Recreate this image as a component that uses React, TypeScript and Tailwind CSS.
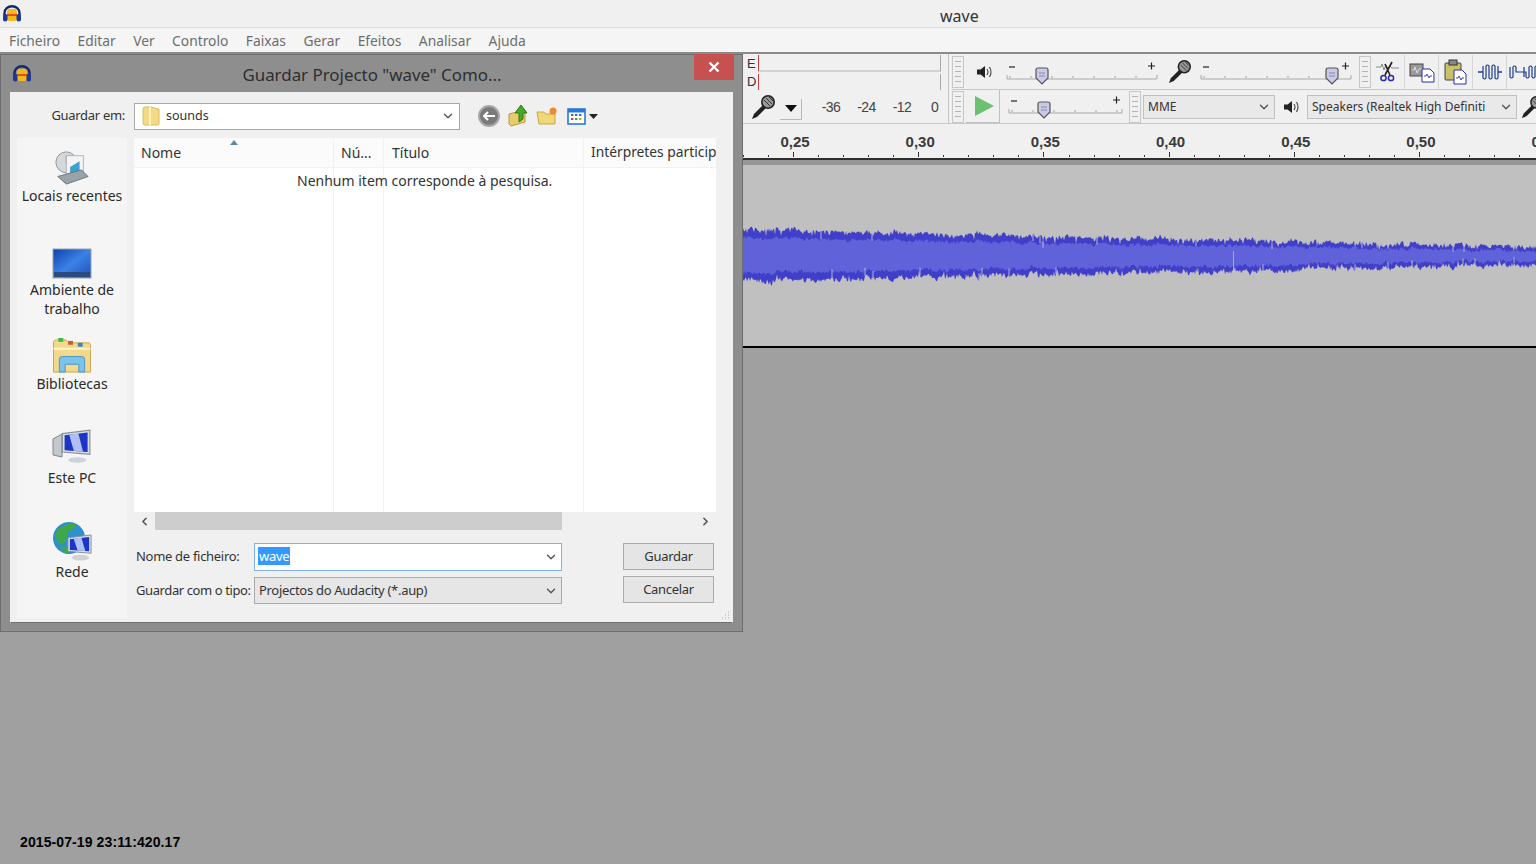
import { useMemo } from "react"
import { ChevronDown, ChevronLeft, ChevronRight } from "lucide-react"

const sans = "font-['Noto_Sans',sans-serif]"

function AudacityLogo() {
    return (
        <svg width="20" height="18" viewBox="0 0 20 18">
            <rect x="5" y="4" width="10" height="12" rx="3" fill="#f8b818" />
            <rect x="5" y="9" width="10" height="2" fill="#e0501a" />
            <path d="M2.5 11 V8 a7.5 6.8 0 0 1 15 0 V11" fill="none" stroke="#16286e" strokeWidth="2.4" />
            <rect x="1" y="9" width="4.5" height="7.5" rx="2" fill="#1d3a9a" />
            <rect x="14.5" y="9" width="4.5" height="7.5" rx="2" fill="#1d3a9a" />
        </svg>
    )
}

function Mic({ size = 26 }: { size?: number }) {
    return (
        <svg width={size} height={size} viewBox="0 0 26 26" className="shrink-0">
            <path d="M2 25 L4 20 L13 11 L16 14 L7 23 Z" fill="#222" />
            <circle cx="18" cy="8" r="6.2" fill="#9a9a9a" stroke="#222" strokeWidth="1.6" />
            <path d="M14 6 L20 12 M16 4 L22 10 M19 3 L23 7" stroke="#333" strokeWidth="1" />
        </svg>
    )
}

function Speaker() {
    return (
        <svg width="17" height="16" viewBox="0 0 17 16">
            <path d="M1 5.5 H4.5 L9 2 V14 L4.5 10.5 H1 Z" fill="#222" />
            <path d="M11 5 Q13 8 11 11 M13.5 3 Q16.5 8 13.5 13" fill="none" stroke="#444" strokeWidth="1.1" />
        </svg>
    )
}

function Gripper({ h }: { h: string }) {
    return (
        <div className={`w-[12px] ${h} shrink-0 border border-[#c8c8c8] flex flex-col justify-center gap-[4px] px-[2px]`}>
            {[0, 1, 2, 3, 4].map((i) => (
                <div key={i} className="h-px bg-[#b4b4b4]" />
            ))}
        </div>
    )
}

function Slider({ width, thumb, trackY, height }: { width: number; thumb: number; trackY: number; height: number }) {
    const ticks = []
    for (let x = 4; x < width - 2; x += 21) ticks.push(x)
    return (
        <svg width={width} height={height} className="shrink-0">
            <path d={`M3 ${trackY - 12} h6`} stroke="#222" strokeWidth="1.2" />
            <path d={`M${width - 10} ${trackY - 13} h7 M${width - 6.5} ${trackY - 16.5} v7`} stroke="#222" strokeWidth="1.2" />
            <path d={`M1 ${trackY - 4} V${trackY} H${width - 1} V${trackY - 4}`} fill="none" stroke="#a8a8a8" />
            {ticks.map((x) => (
                <path key={x} d={`M${x} ${trackY - 3} v2`} stroke="#a0a0a0" />
            ))}
            <path
                d={`M${thumb - 6} ${trackY - 9} q0 -2 2 -2 h8 q2 0 2 2 v8 l-6 6 l-6 -6 Z`}
                fill="#c9c9e8"
                stroke="#555"
                strokeWidth="1.2"
            />
            <path d={`M${thumb - 3} ${trackY - 6} h6 M${thumb - 3} ${trackY - 3} h6`} stroke="#8888a8" />
        </svg>
    )
}

function Select({ width, text }: { width: string; text: string }) {
    return (
        <div className={`${width} h-[24px] shrink-0 flex items-center justify-between border border-[#c0c0c0] bg-[#e9e9e9] pl-[4px] pr-[3px] text-[12px] text-[#333] ${sans}`}>
            <span className="whitespace-nowrap overflow-hidden">{text}</span>
            <ChevronDown size={14} strokeWidth={2.4} className="text-[#555] shrink-0" />
        </div>
    )
}

function ToolButton({ children }: { children: React.ReactNode }) {
    return <div className="w-[34px] h-[34px] shrink-0 border-r border-[#d6d6d6] flex items-center justify-center">{children}</div>
}

function MeterToolbar() {
    return (
        <div className="w-[206px] h-[70px] shrink-0 border-r border-[#c6c6c6] flex flex-col">
            <div className="flex items-center h-[19px]">
                <span className="w-[15px] pl-[4px] text-[13px] leading-none text-[#333] font-['Liberation_Sans',sans-serif]">E</span>
                <div className="w-[183px] h-[17px] bg-[#f0f0f0] border-l border-l-[#c04040] border-r border-r-[#a8a8a8] border-b-2 border-b-[#d2d2d2]" />
            </div>
            <div className="flex items-center h-[17px]">
                <span className="w-[15px] pl-[4px] text-[13px] leading-none text-[#333] font-['Liberation_Sans',sans-serif]">D</span>
                <div className="w-[183px] h-[16px] bg-[#f0f0f0] border-l border-l-[#c04040] border-r border-r-[#a8a8a8]" />
            </div>
            <div className="flex items-center h-[34px] pl-[7px]">
                <Mic />
                <div className="ml-[4px] w-[22px] h-[21px] mt-[4px] shrink-0 border-r border-b border-[#b8b8b8] flex items-center justify-center">
                    <svg width="12" height="7"><path d="M0 0 H12 L6 7 Z" fill="#111" /></svg>
                </div>
                <div className="flex shrink-0 ml-[11px] text-[14px] tracking-[-0.5px] text-[#444] font-['Liberation_Sans',sans-serif]">
                    <span className="w-[36px] text-center">-36</span>
                    <span className="w-[35px] text-center">-24</span>
                    <span className="w-[36px] text-center">-12</span>
                    <span className="w-[26px] pl-[11px]">0</span>
                </div>
            </div>
        </div>
    )
}

function EditIcons() {
    return (
        <div className="flex shrink-0">
            <ToolButton>
                <svg width="24" height="22" viewBox="0 0 24 22">
                    <path d="M0 6 h5 l1 -3 l2 6 l2 -5 l2 4 l2 -3 l2 2 h7" fill="none" stroke="#888" />
                    <path d="M16 1 L9 14 M9 3 L14 14" stroke="#222" strokeWidth="1.6" />
                    <circle cx="7.5" cy="17" r="2.6" fill="none" stroke="#2a2ab0" strokeWidth="1.5" />
                    <circle cx="15" cy="17" r="2.6" fill="none" stroke="#2a2ab0" strokeWidth="1.5" />
                </svg>
            </ToolButton>
            <ToolButton>
                <svg width="26" height="22" viewBox="0 0 26 22">
                    <rect x="1" y="3" width="13" height="12" fill="#999" stroke="#444" />
                    <path d="M3 9 h2 l1 -3 l2 6 l2 -4 h3" stroke="#ddd" fill="none" />
                    <path d="M13 8 h8 l4 4 v9 h-12 Z" fill="#fff" stroke="#2a2ab0" />
                    <path d="M15 15 h2 l1 -2 l2 4 l1 -2 h2" stroke="#4a4ab0" fill="none" />
                </svg>
            </ToolButton>
            <ToolButton>
                <svg width="26" height="26" viewBox="0 0 26 26">
                    <rect x="2" y="4" width="16" height="17" rx="1" fill="#c9c16a" stroke="#444" />
                    <rect x="6" y="1" width="8" height="5" fill="#888" stroke="#333" />
                    <path d="M11 11 h8 l4 4 v10 h-12 Z" fill="#fff" stroke="#2a2ab0" />
                    <path d="M13 19 h2 l1 -2 l2 4 l1 -2 h2" stroke="#4a4ab0" fill="none" />
                </svg>
            </ToolButton>
            <ToolButton>
                <svg width="26" height="20" viewBox="0 0 26 20">
                    <path d="M1 10 H6 M21 10 H25" stroke="#1a3a90" strokeWidth="1.3" />
                    <path d="M6 4 V16 Q7.5 18 9 16 V4 Q10.5 2 12 4 V16 Q13.5 18 15 16 V4 Q16.5 2 18 4 V16 Q19.5 18 21 16 V4" stroke="#1a3a90" strokeWidth="1.2" fill="none" />
                </svg>
            </ToolButton>
            <div className="w-[32px] h-[34px] shrink-0 flex items-center justify-end">
                <svg width="30" height="20" viewBox="0 0 30 20">
                    <path d="M1 5 V15 Q2.5 17 4 15 V5 Q5.5 3 7 5 V10 H15 V5 V15 M15 10 H17 V15 Q18.5 17 20 15 V5 Q21.5 3 23 5 V15 Q24.5 17 26 15 V5 Q27.5 3 29 5 V15" stroke="#1a3a90" strokeWidth="1.2" fill="none" />
                </svg>
            </div>
        </div>
    )
}

function Toolbars() {
    return (
        <div className="h-[70px] flex bg-[#f0f0f0] border-b border-[#c8c8c8] overflow-hidden">
            <MeterToolbar />
            <div className="flex flex-col flex-1 min-w-0 pl-[3px]">
                <div className="h-[36px] shrink-0 flex items-center border-b border-[#c8c8c8]">
                    <Gripper h="h-[32px]" />
                    <div className="w-[37px] shrink-0 flex justify-end pr-[10px] ml-[2px]"><Speaker /></div>
                    <div className="ml-[3px]"><Slider width={152} thumb={36} trackY={24} height={34} /></div>
                    <div className="w-[42px] shrink-0 flex justify-center"><Mic size={25} /></div>
                    <Slider width={152} thumb={132} trackY={24} height={34} />
                    <div className="ml-[7px]"><Gripper h="h-[32px]" /></div>
                    <EditIcons />
                </div>
                <div className="h-[33px] shrink-0 flex items-center">
                    <Gripper h="h-[32px]" />
                    <div className="w-[34px] h-[33px] shrink-0 flex items-center justify-center pl-[3px] border-r border-b border-[#c0c0c0] ml-[2px]">
                        <svg width="19" height="20"><path d="M0 0 L19 10 L0 20 Z" fill="#6cc070" /></svg>
                    </div>
                    <div className="ml-[8px]"><Slider width={115} thumb={36} trackY={23} height={33} /></div>
                    <div className="ml-[6px] mr-[2px]"><Gripper h="h-[32px]" /></div>
                    <Select width="w-[132px]" text="MME" />
                    <div className="w-[32px] shrink-0 flex justify-center"><Speaker /></div>
                    <Select width="w-[210px]" text="Speakers (Realtek High Definiti" />
                    <div className="ml-[3px] shrink-0"><Mic size={24} /></div>
                </div>
            </div>
        </div>
    )
}

function Ruler() {
    const labels = ["0,25", "0,30", "0,35", "0,40", "0,45", "0,50", "0,55"]
    const minor: number[] = []
    for (let x = 0; x < 800; x += 25.04) minor.push(x)
    return (
        <div className="h-[36px] bg-[#f0f0f0] flex flex-col overflow-hidden">
            <div className="h-[28px] shrink-0 flex items-end font-['Liberation_Sans',sans-serif] font-bold text-[15px] leading-[20px] text-[#3a3a3a]">
                {labels.map((label, i) => (
                    <div key={label} className={`w-[125.2px] shrink-0 text-center ${i === 0 ? "ml-[-10.6px]" : ""}`}>{label}</div>
                ))}
            </div>
            <svg width="793" height="6" className="block shrink-0">
                {minor.map((x, i) => {
                    const px = Math.round(x) + 0.5
                    return <path key={i} d={`M${px} ${i % 5 === 2 ? 0 : 3} V5`} stroke="#333" strokeWidth="1" />
                })}
            </svg>
            <div className="h-[2px] shrink-0 bg-[#2e2e2e]" />
        </div>
    )
}

function Waveform() {
    const paths = useMemo(() => {
        let seed = 19
        const rnd = () => {
            seed = (seed * 16807) % 2147483647
            return seed / 2147483647
        }
        const w = 793
        let upper = ""
        let lower = ""
        let innerTop = ""
        let innerBottom = ""
        let slowA = 0
        let slowB = 0
        let spikes = ""
        for (let x = 0; x <= w; x += 1) {
            const t = x / w
            const topEnv = 61 + 17 * t
            const botEnv = 120 - 16 * t
            const band = 12 - 4 * t
            slowA = slowA * 0.7 + (rnd() - 0.5) * 2.6
            slowB = slowB * 0.7 + (rnd() - 0.5) * 2.6
            const up = topEnv + 4 + slowA * 1.2 + (rnd() - 0.5) * 4 + (rnd() > 0.94 ? 4 : 0)
            const low = botEnv - 4 + slowB * 1.2 + (rnd() - 0.5) * 4 - (rnd() > 0.94 ? 4 : 0)
            upper += `${x === 0 ? "M" : "L"}${x} ${up.toFixed(1)} `
            lower = `L${x} ${low.toFixed(1)} ` + lower
            innerTop += `${x === 0 ? "M" : "L"}${x} ${(topEnv + band + slowA * 0.8 + (rnd() - 0.5) * 3).toFixed(1)} `
            innerBottom = `L${x} ${(botEnv - band + slowB * 0.8 + (rnd() - 0.5) * 3).toFixed(1)} ` + innerBottom
            if (rnd() > 0.975) {
                const isTop = rnd() > 0.5
                spikes += isTop ? `M${x} ${up.toFixed(1)} v${(band * 0.7).toFixed(1)} ` : `M${x} ${low.toFixed(1)} v-${(band * 0.7).toFixed(1)} `
            }
        }
        return { outer: upper + lower + "Z", inner: innerTop + innerBottom + "Z", spikes }
    }, [])

    return (
        <div className="h-[183px] bg-[#c0c0c0] border-b-2 border-black">
            <svg width="793" height="181" className="block">
                <path d={paths.outer} fill="#3f3fc9" />
                <path d={paths.inner} fill="#5f62d9" />
                <path d={paths.spikes} stroke="#b4b4d8" strokeWidth="1" fill="none" />
                <path d="M490.5 86 V106" stroke="#a8a8dc" strokeWidth="1" />
            </svg>
        </div>
    )
}

function SidebarItem({ label, children }: { label: string; children: React.ReactNode }) {
    return (
        <div className="h-[94px] flex flex-col items-center">
            <div className="h-[48px] shrink-0 flex items-end justify-center">{children}</div>
            <div className="text-center leading-[19px] text-[14px] text-[#2a2a2a]">{label}</div>
        </div>
    )
}

function MonitorGlyph({ w = 28 }: { w?: number }) {
    return (
        <svg width={w} height={w} viewBox="0 0 28 28">
            <path d="M2 4 L26 1 V20 L2 18 Z" fill="#d8dde4" stroke="#8a9099" />
            <path d="M4 5.5 L24 3 V18 L4 16.5 Z" fill="#1a35c8" />
            <path d="M8 5 L16 4 L20 17.5 L12 17 Z" fill="#e4ecff" opacity="0.75" />
            <ellipse cx="15" cy="24.5" rx="9" ry="3" fill="#cfd3d8" />
        </svg>
    )
}

function Sidebar() {
    return (
        <div className={`w-[110px] h-[480px] shrink-0 bg-[#f5f5f5] ${sans}`}>
            <SidebarItem label="Locais recentes">
                <svg width="40" height="36" viewBox="0 0 40 38">
                    <circle cx="14" cy="13" r="11" fill="#d4d8da" stroke="#8a9399" />
                    <path d="M14 6 v7 h6" fill="none" stroke="#6a7379" />
                    <rect x="14" y="6" width="18" height="20" fill="#f4f4f4" stroke="#b0b4b8" />
                    <path d="M18 18 L28 12 V24 L18 26 Z" fill="#3ba2d0" />
                    <path d="M5 28 L30 21 L37 28 L14 36 Z" fill="#9aa3a8" stroke="#6a7379" />
                </svg>
            </SidebarItem>
            <SidebarItem label="Ambiente de trabalho">
                <svg width="40" height="31" viewBox="0 0 40 31" className="mb-[1px]">
                    <defs>
                        <linearGradient id="desk" x1="0" y1="0" x2="1" y2="1">
                            <stop offset="0" stopColor="#0e3fa8" />
                            <stop offset="0.5" stopColor="#3b82e6" />
                            <stop offset="1" stopColor="#1e4fb8" />
                        </linearGradient>
                    </defs>
                    <rect x="1" y="1" width="38" height="29" fill="url(#desk)" stroke="#9aa4ad" />
                    <rect x="2" y="24" width="36" height="5" fill="#2a4a80" />
                </svg>
            </SidebarItem>
            <SidebarItem label="Bibliotecas">
                <svg width="40" height="37" viewBox="0 0 40 38">
                    <path d="M1 36 V6 Q1 3 4 3 H14 L17 6 H37 Q39 6 39 9 V36 Z" fill="#f3d98c" stroke="#c8a850" />
                    <rect x="6" y="1" width="5" height="4" fill="#3bb84a" />
                    <rect x="16" y="4" width="5" height="4" fill="#c0603a" />
                    <rect x="26" y="6" width="5" height="4" fill="#3a88c8" />
                    <path d="M1 12 H39" stroke="#fff3c8" strokeWidth="2" />
                    <path d="M7 36 V23 Q7 20 10 20 H30 Q33 20 33 23 V36 H27 V28 H13 V36 Z" fill="#7cc2ea" stroke="#4a96c8" />
                </svg>
            </SidebarItem>
            <SidebarItem label="Este PC">
                <svg width="40" height="36" viewBox="0 0 40 36" className="mb-[3px]">
                    <path d="M1 10 L10 5 V28 L1 26 Z" fill="#c4c8cc" stroke="#808890" />
                    <g transform="translate(8 0) scale(1.15)">
                        <path d="M2 4 L26 1 V22 L2 20 Z" fill="#d8dde4" stroke="#8a9099" />
                        <path d="M4 5.5 L24 3 V20 L4 18.5 Z" fill="#1a35c8" />
                        <path d="M8 5 L16 4 L20 19.5 L12 19 Z" fill="#e4ecff" opacity="0.75" />
                        <ellipse cx="15" cy="27" rx="8" ry="2.4" fill="#cfd3d8" />
                    </g>
                </svg>
            </SidebarItem>
            <SidebarItem label="Rede">
                <div className="relative w-[40px] h-[40px] mb-[1px]">
                    <svg width="40" height="40" viewBox="0 0 40 40">
                        <circle cx="17" cy="17" r="16" fill="#2f8fd0" />
                        <path d="M6 8 Q14 2 24 3 Q22 10 15 11 Q16 20 10 24 Q4 20 3 14 Z" fill="#3fa848" />
                        <path d="M8 26 Q14 24 20 30 L14 33 Z" fill="#3fa848" />
                    </svg>
                    <div className="absolute right-[-1px] bottom-0"><MonitorGlyph w={27} /></div>
                </div>
            </SidebarItem>
        </div>
    )
}

function FileList() {
    return (
        <div className={`relative w-[582px] h-[374px] bg-white overflow-hidden flex text-[14px] text-[#333] ${sans}`}>
            <div className="w-[200px] shrink-0 border-r border-[#eef1f6]">
                <div className="relative h-[30px] pl-[7px] pb-[1px] flex items-center bg-[#fbfbfb] border-b border-[#eef1f6]">
                    Nome
                    <svg width="8" height="5" className="absolute left-[96px] top-[2px]"><path d="M0 5 L4 0 L8 5 Z" fill="#5a88a8" /></svg>
                </div>
            </div>
            <div className="w-[50px] shrink-0 border-r border-[#eef1f6]">
                <div className="h-[30px] pl-[7px] pb-[1px] flex items-center bg-[#fbfbfb] border-b border-[#eef1f6]">Nú...</div>
            </div>
            <div className="w-[200px] shrink-0 border-r border-[#eef1f6]">
                <div className="h-[30px] pl-[8px] pb-[1px] flex items-center bg-[#fbfbfb] border-b border-[#eef1f6]">Título</div>
            </div>
            <div className="flex-1 min-w-0">
                <div className="h-[30px] pl-[7px] flex items-center whitespace-nowrap overflow-hidden bg-[#fbfbfb] border-b border-[#eef1f6] text-[13.8px]">Intérpretes particip</div>
            </div>
            <div className="absolute left-[163px] top-[32px] whitespace-nowrap">Nenhum item corresponde à pesquisa.</div>
        </div>
    )
}

function Dialog() {
    return (
        <div className="w-[743px] h-[578px] shrink-0 bg-[#8e8e8e] border border-[#6e6e6e] flex flex-col">
            <div className="h-[37px] shrink-0 flex items-start">
                <div className="w-[22px] h-[37px] ml-[11px] flex items-center"><AudacityLogo /></div>
                <div className={`flex-1 h-[37px] flex items-center justify-center text-[16.9px] text-[#2e2e2e] pl-[16px] pt-[2px] ${sans}`}>Guardar Projecto "wave" Como...</div>
                <div className="w-[40px] h-[26px] mt-[-1px] mr-[8px] bg-[#c75050] flex items-center justify-center">
                    <svg width="12" height="12"><path d="M1.5 1.5 L10.5 10.5 M10.5 1.5 L1.5 10.5" stroke="#fff" strokeWidth="2.4" /></svg>
                </div>
            </div>
            <div className="mx-[9px] w-[723px] h-[531px] bg-[#f0f0f0] border border-[#f0f0f0] border-b-[#707070] flex flex-col">
                <div className="h-[37px] shrink-0 flex items-center pt-[9px]">
                    <div className={`w-[114px] text-right text-[13px] tracking-[-0.3px] text-[#333] ${sans}`}>Guardar em:</div>
                    <div className={`ml-[9px] w-[326px] h-[27px] bg-white border border-[#a8a8a8] flex items-center pl-[7px] pr-[4px] text-[12.5px] text-[#333] ${sans}`}>
                        <svg width="18" height="20" viewBox="0 0 18 20"><path d="M1 3 Q1 1 3 1 H8 L17 3 V18 Q17 19 15 19 H3 Q1 19 1 17 Z" fill="#f4da84" stroke="#d8bc60" /><path d="M8 1 V19" stroke="#fff4c0" strokeWidth="2" /></svg>
                        <span className="ml-[6px] flex-1">sounds</span>
                        <ChevronDown size={14} strokeWidth={2.4} className="text-[#555]" />
                    </div>
                    <div className="ml-[18px] w-[22px] h-[22px] rounded-full bg-[#7a7a7a] border-2 border-[#a8a8a8] flex items-center justify-center">
                        <svg width="12" height="10"><path d="M5 1 L1 5 L5 9 M1 5 H12" fill="none" stroke="#fff" strokeWidth="2" /></svg>
                    </div>
                    <svg width="22" height="24" viewBox="0 0 22 24" className="ml-[7px]">
                        <path d="M2 10 L10 8 V6 H18 V18 L4 22 L2 20 Z" fill="#e8cc6c" stroke="#b89c40" />
                        <path d="M12 18 V9 H8 L14 1 L20 9 H16 V15 Z" fill="#4aa828" stroke="#2a7c14" />
                    </svg>
                    <svg width="22" height="20" viewBox="0 0 22 20" className="ml-[7px]">
                        <path d="M1 6 H8 L10 8 H19 V18 H3 Z" fill="#f0d878" stroke="#c8a848" />
                        <circle cx="17" cy="5" r="3.5" fill="#f08830" />
                    </svg>
                    <svg width="20" height="17" viewBox="0 0 20 17" className="ml-[9px]">
                        <rect x="1" y="1" width="17" height="15" fill="#fff" stroke="#2a78d8" strokeWidth="1.6" />
                        <rect x="1" y="1" width="17" height="3.5" fill="#2a78d8" />
                        <path d="M4 7 h2.4 M8 7 h2.4 M12 7 h2.4" stroke="#3a6ac0" strokeWidth="2" />
                        <path d="M4 11 h2.4" stroke="#d04040" strokeWidth="2" />
                        <path d="M8 11 h2.4" stroke="#40a040" strokeWidth="2" />
                        <path d="M12 11 h2.4" stroke="#e0a020" strokeWidth="2" />
                    </svg>
                    <svg width="9" height="5" className="ml-[2px]"><path d="M0 0 H9 L4.5 5 Z" fill="#222" /></svg>
                </div>
                <div className="flex pl-[6px] pt-[8px]">
                    <Sidebar />
                    <div className="ml-[7px] flex flex-col">
                        <FileList />
                        <div className="w-[582px] h-[18px] flex items-center text-[#555]">
                            <div className="w-[21px] flex justify-center"><ChevronLeft size={13} strokeWidth={3} /></div>
                            <div className="w-[407px] h-[18px] bg-[#cdcdcd]" />
                            <div className="flex-1 flex justify-end pr-[4px]"><ChevronRight size={13} strokeWidth={3} /></div>
                        </div>
                        <div className={`pt-[12px] flex text-[13px] tracking-[-0.3px] text-[#333] ${sans}`}>
                            <div className="w-[428px] flex flex-col gap-[6px] pt-[1px]">
                                <div className="flex items-center">
                                    <span className="w-[120px] pl-[2px] shrink-0">Nome de ficheiro:</span>
                                    <div className="w-[308px] h-[28px] bg-white border border-[#7eb4ea] flex items-center pl-[3px] pr-[3px]">
                                        <span className="flex-1"><span className="bg-[#3399ff] text-white px-[1px]">wave</span></span>
                                        <ChevronDown size={14} strokeWidth={2.4} className="text-[#555]" />
                                    </div>
                                </div>
                                <div className="flex items-center">
                                    <span className="w-[120px] pl-[2px] shrink-0 whitespace-nowrap tracking-[-0.4px]">Guardar com o tipo:</span>
                                    <div className="w-[308px] h-[27px] bg-[#e6e6e6] border border-[#ababab] flex items-center pl-[4px] pr-[3px]">
                                        <span className="flex-1">Projectos do Audacity (*.aup)</span>
                                        <ChevronDown size={14} strokeWidth={2.4} className="text-[#555]" />
                                    </div>
                                </div>
                            </div>
                            <div className="ml-[61px] flex flex-col gap-[6px] pt-[1px]">
                                <div className="w-[91px] h-[27px] bg-[#e5e5e5] border border-[#7eb4ea] flex items-center justify-center">Guardar</div>
                                <div className="w-[91px] h-[27px] bg-[#e5e5e5] border border-[#acacac] flex items-center justify-center">Cancelar</div>
                            </div>
                        </div>
                    </div>
                </div>
                <div className="relative flex-1">
                    <svg width="10" height="10" className="absolute right-[2px] bottom-[1px]">
                        <path d="M8 1 h1 M5 4 h1 M8 4 h1 M2 7 h1 M5 7 h1 M8 7 h1" stroke="#a8a8a8" />
                    </svg>
                </div>
            </div>
        </div>
    )
}

export default function App() {
    return (
        <div className="w-[1536px] h-[864px] overflow-hidden bg-[#a0a0a0] flex flex-col">
            <div className="h-[28px] shrink-0 bg-[#f0f0f0] border-b border-[#dcdcdc] relative flex items-center pl-[2px]">
                <AudacityLogo />
                <div className={`absolute left-[940px] top-[6px] text-[16px] leading-[20px] text-[#333] ${sans}`}>wave</div>
            </div>
            <div className={`h-[26px] shrink-0 bg-[#f5f5f5] border-b-2 border-[#8a8a8a] flex items-center pl-[9px] pt-[2px] gap-[17.5px] text-[13.8px] text-[#6d6d6d] ${sans}`}>
                {["Ficheiro", "Editar", "Ver", "Controlo", "Faixas", "Gerar", "Efeitos", "Analisar", "Ajuda"].map((m) => (
                    <span key={m}>{m}</span>
                ))}
            </div>
            <div className="flex flex-1 min-h-0">
                <div className="w-[743px] shrink-0 flex flex-col">
                    <Dialog />
                    <div className="mt-auto pl-[20px] pb-[13px] font-['Liberation_Sans',sans-serif] font-bold text-[14px] tracking-[0.1px] leading-[18px] text-black">2015-07-19 23:11:420.17</div>
                </div>
                <div className="flex-1 min-w-0 flex flex-col">
                    <Toolbars />
                    <Ruler />
                    <div className="h-[5px] bg-[#969696]" />
                    <Waveform />
                </div>
            </div>
        </div>
    )
}
